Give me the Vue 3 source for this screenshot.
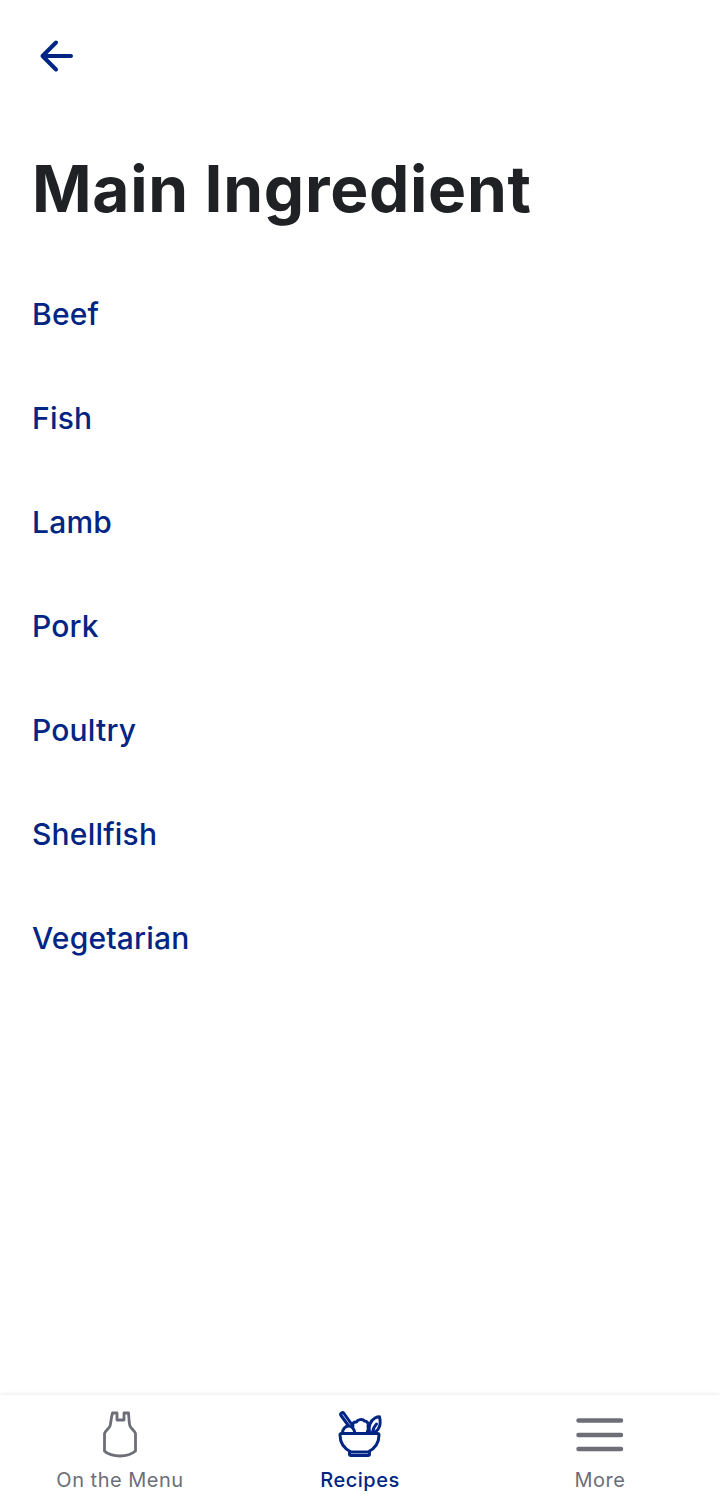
<script setup>
const items = ['Beef', 'Fish', 'Lamb', 'Pork', 'Poultry', 'Shellfish', 'Vegetarian']
</script>

<template>
  <div class="page">
    <header class="top">
      <button class="back" aria-label="Back">
        <svg width="48" height="48" viewBox="0 0 48 48" fill="none">
          <path d="M39 24H10.500M24 10.500 10.500 24 24 37.500" stroke="#002584" stroke-width="4" stroke-linecap="round" stroke-linejoin="round" />
        </svg>
      </button>
    </header>
    <h1 class="title">Main Ingredient</h1>
    <ul class="list">
      <li v-for="item in items" :key="item" class="item">{{ item }}</li>
    </ul>
    <nav class="tabs">
      <div class="tab">
        <svg class="icon" width="48" height="48" viewBox="0 0 48 48" fill="none">
          <path d="M16.500 2H21v7h7V2h4.500c.5 5 .5 10 1.500 13 1 2.500 5 5 5.500 7.500V40C36 43 30 45 24 45S11 43 8.500 40V22.500C9 20 13 17.500 14 15c1-3 1-8 2.500-13Z" stroke="#6d6e78" stroke-width="2.800" stroke-linejoin="round" />
        </svg>
        <span class="label">On the Menu</span>
      </div>
      <div class="tab active">
        <svg class="icon" width="48" height="48" viewBox="0 0 48 48" fill="none" stroke="#002584" stroke-width="3" stroke-linecap="round" stroke-linejoin="round">
          <path d="M4 24c0-1 .5-1.500 1.500-1.500h36c1 0 1.500.5 1.500 1.500 0 8-5 14-11 17H15C9 38 4 32 4 24Z" />
          <path d="M13.500 41v2c0 1 .5 1.500 1.500 1.500h17c1 0 1.500-.5 1.500-1.500v-2" />
          <path d="M12 14 5 4.500c-.6-1-.3-2 .5-2.500s1.800-.4 2.500.5l7.500 10.500" />
          <path d="M6.500 22c0-4 3-7 6-7s5.500 2.500 6.500 7" />
          <path d="M17 15c-1-2.500 1-4.500 3.500-4 1-2.500 6-3.500 8-1 2.500 0 4.500 2.500 3.500 5.500 .8 2 .3 4-1 6.500" />
          <path d="M33.500 21.500c-1.500-6 1-12 5.500-14.500 1.500-.8 3-1.200 4.500-1.200 1 4 1 9-1.500 12.500-1.500 2-3.500 3-5 3.700" />
          <path d="M36.500 21c.5-3 2-6 4-8" />
        </svg>
        <span class="label">Recipes</span>
      </div>
      <div class="tab">
        <svg class="icon" width="48" height="48" viewBox="0 0 48 48" fill="none">
          <path d="M2.500 9.500H45M2.500 24H45M2.500 38H45" stroke="#6d6e78" stroke-width="4.500" stroke-linecap="round" />
        </svg>
        <span class="label">More</span>
      </div>
    </nav>
  </div>
</template>

<style scoped>
.page {
  position: relative;
  display: flex;
  flex-direction: column;
  width: 720px;
  height: 1507px;
  background: #fff;
  font-family: Inter, "Noto Sans", sans-serif;
  overflow: hidden;
}
.top {
  display: flex;
  padding: 32px 32px 0;
}
.back {
  display: block;
  width: 48px;
  height: 48px;
  padding: 0;
  border: 0;
  background: none;
}
.title {
  margin: 67px 0 0 32px;
  font-size: 64px;
  line-height: 84px;
  font-weight: 650;
  letter-spacing: 0.7px;
  color: #202124;
}
.list {
  flex: 1;
  margin: 31px 0 0;
  padding: 0 0 0 32px;
  list-style: none;
}
.item {
  height: 104px;
  line-height: 104px;
  font-size: 30px;
  font-weight: 500;
  letter-spacing: 0.2px;
  color: #002584;
}
.tabs {
  display: grid;
  grid-template-columns: repeat(3, 240px);
  height: 112px;
  box-shadow: 0 -1px 4px rgba(0, 0, 0, 0.08);
}
.tab {
  display: flex;
  flex-direction: column;
  align-items: center;
  padding-top: 16px;
  color: #6d6e78;
}
.tab.active {
  color: #002584;
}
.icon {
  display: block;
}
.label {
  margin-top: 7px;
  font-size: 20px;
  line-height: 28px;
  font-weight: 400;
  letter-spacing: 0.5px;
}
.tab.active .label {
  font-weight: 500;
}
</style>
